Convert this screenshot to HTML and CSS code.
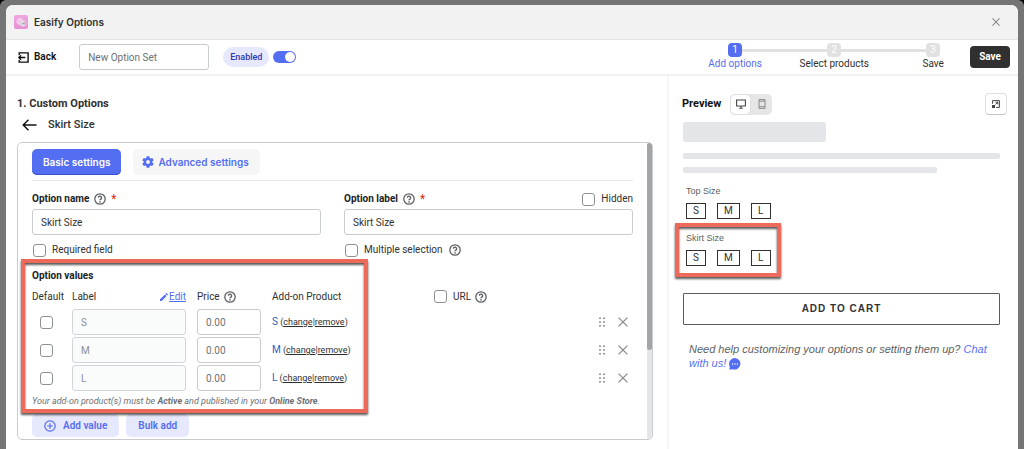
FILE: index.html
```html
<!DOCTYPE html>
<html lang="en">
<head>
<meta charset="utf-8">
<title>Easify Options</title>
<link rel="stylesheet" href="styles.css">
</head>
<body>
<svg class="defs" aria-hidden="true">
  <symbol id="help" viewBox="0 0 12 12"><circle cx="6" cy="6" r="5.2" fill="none" stroke="currentColor" stroke-width="1.3"/><path d="M4.4 4.8a1.6 1.6 0 1 1 2.5 1.3c-.6.4-.9.6-.9 1.2" fill="none" stroke="currentColor" stroke-width="1.3"/><circle cx="6" cy="8.9" r=".8" fill="currentColor"/></symbol>
  <symbol id="close" viewBox="0 0 10 10"><path d="M.6.6l8.800 8.800M9.400.6L.6 9.400" fill="none" stroke="currentColor" stroke-width="1.300"/></symbol>
  <symbol id="drag" viewBox="0 0 6 10"><g fill="currentColor"><circle cx="1" cy="1.200" r="1"/><circle cx="5" cy="1.200" r="1"/><circle cx="1" cy="5" r="1"/><circle cx="5" cy="5" r="1"/><circle cx="1" cy="8.800" r="1"/><circle cx="5" cy="8.800" r="1"/></g></symbol>
</svg>
<div class="window">
  <header class="titlebar">
    <svg class="logo" viewBox="0 0 14 14" aria-hidden="true">
      <defs><linearGradient id="pink" x1="0" y1="0" x2="0" y2="1"><stop offset="0" stop-color="#f0a6e0"/><stop offset="1" stop-color="#e58fd4"/></linearGradient></defs>
      <rect width="14" height="14" rx="2" fill="url(#pink)"/>
      <path d="M2.500 7c0-3 2-4.500 4.200-4.200 2 .2 2.300 2 3.300 3 1.500-.2 2.500 1 2.500 2.700 0 2-1.500 3-3.500 3-1.500 0-1.700-1-2.500-1.500-2 .3-4-.8-4-3z" fill="#f3c9ea"/>
      <path d="M5.500 7.500c1-1.500 3-1.800 4.500-1.200 1.500-.6 2.300.8 2.200 2.500-.2 1.700-1.500 2.700-3.200 2.700-2 0-3.500-1.800-3.500-4z" fill="#dfd6de"/>
      <circle cx="9" cy="8.600" r=".6" fill="#76657a"/><path d="M11 7v2.500" stroke="#8d7f92" stroke-width=".8"/>
    </svg>
    <h1 class="title">Easify Options</h1>
    <button class="icon-button" aria-label="Close"><svg class="icon-8"><use href="#close"/></svg></button>
  </header>

  <div class="toolbar">
    <button class="back">
      <svg class="icon-11" viewBox="0 0 11 11" aria-hidden="true"><path d="M1.200 3V.9h8.900v9.200H1.200V8M.3 5.500h7M3 3.200L.9 5.500 3 7.800" fill="none" stroke="currentColor" stroke-width="1.400"/></svg>
      Back
    </button>
    <input class="field set-name" type="text" placeholder="New Option Set" aria-label="Option set name">
    <label class="pill" for="enabled">Enabled</label>
    <input class="switch" id="enabled" type="checkbox" checked>
    <ol class="steps">
      <li class="step current"><span class="badge">1</span><span>Add options</span></li>
      <li class="rail" aria-hidden="true"></li>
      <li class="step"><span class="badge">2</span><span>Select products</span></li>
      <li class="rail" aria-hidden="true"></li>
      <li class="step"><span class="badge">3</span><span>Save</span></li>
    </ol>
    <button class="save">Save</button>
  </div>

  <div class="columns">
    <main class="editor">
      <h2 class="heading">1. Custom Options</h2>
      <div class="crumb">
        <button class="icon-button" aria-label="Back to options"><svg class="arrow" viewBox="0 0 15 12" aria-hidden="true"><path d="M14.500 6H1.200M6.500 .8L1.200 6l5.300 5.200" fill="none" stroke="currentColor" stroke-width="1.400"/></svg></button>
        <h3 class="crumb-title">Skirt Size</h3>
      </div>

      <section class="panel">
        <div class="panel-body">
          <div class="tabs">
            <button class="tab active">Basic settings</button>
            <button class="tab">
              <svg class="icon-12" viewBox="2 2 20 20" aria-hidden="true"><path fill="currentColor" d="M19.140 12.940c.04-.3.060-.61.060-.94s-.02-.64-.07-.94l2.030-1.580a.49.49 0 0 0 .12-.61l-1.920-3.320a.488.488 0 0 0-.59-.22l-2.390.96c-.5-.38-1.030-.7-1.620-.94l-.36-2.540a.484.484 0 0 0-.48-.41h-3.840c-.24 0-.43.17-.47.41l-.36 2.540c-.59.24-1.130.57-1.620.94l-2.390-.96c-.22-.08-.47 0-.59.22L2.740 8.870c-.12.21-.08.47.12.61l2.030 1.580c-.05.3-.09.63-.09.94s.02.64.07.94l-2.030 1.580a.49.49 0 0 0-.12.61l1.920 3.320c.12.22.37.29.59.22l2.390-.96c.5.38 1.030.7 1.620.94l.36 2.540c.05.24.24.41.48.41h3.840c.24 0 .44-.17.47-.41l.36-2.540c.59-.24 1.130-.56 1.620-.94l2.390.96c.22.08.47 0 .59-.22l1.920-3.320c.12-.22.07-.47-.12-.61l-2.010-1.580zM12 15.200A3.200 3.200 0 1 1 12 8.800a3.200 3.200 0 0 1 0 6.400z"/></svg>
              Advanced settings
            </button>
          </div>

          <div class="fields">
            <div>
              <div class="label-row">
                <label class="strong" for="name">Option name</label>
                <svg class="help"><use href="#help"/></svg><span class="required">*</span>
              </div>
              <input class="field" id="name" type="text" value="Skirt Size">
              <div class="check-row">
                <input class="check" id="required" type="checkbox"><label for="required">Required field</label>
              </div>
            </div>
            <div>
              <div class="label-row">
                <label class="strong" for="label">Option label</label>
                <svg class="help"><use href="#help"/></svg><span class="required">*</span>
                <span class="hidden-option"><input class="check" id="hidden" type="checkbox"><label for="hidden">Hidden</label></span>
              </div>
              <input class="field" id="label" type="text" value="Skirt Size">
              <div class="check-row">
                <input class="check" id="multiple" type="checkbox"><label for="multiple">Multiple selection</label>
                <svg class="help"><use href="#help"/></svg>
              </div>
            </div>
          </div>

          <div class="values">
            <h4 class="values-title">Option values</h4>
            <table class="table">
              <colgroup><col class="col-default"><col class="col-label"><col class="col-price"><col class="col-product"><col><col class="col-actions"></colgroup>
              <thead>
                <tr>
                  <th>Default</th>
                  <th><div class="split"><span>Label</span><a class="edit" href="#"><svg class="icon-8" viewBox="0 0 8 8" aria-hidden="true"><path d="M0 8V6.300L4.900 1.400l1.700 1.700L1.700 8zM5.400.9L6 .3q.4-.4.8 0l.9.9q.4.4 0 .8l-.6.6z" fill="currentColor"/></svg><span>Edit</span></a></div></th>
                  <th><div class="inline">Price<svg class="help"><use href="#help"/></svg></div></th>
                  <th>Add-on Product</th>
                  <th><div class="inline"><input class="check" id="url" type="checkbox"><label class="url-label" for="url">URL</label><svg class="help"><use href="#help"/></svg></div></th>
                  <th></th>
                </tr>
              </thead>
              <tbody>
                <tr>
                  <td><input class="check centred" type="checkbox" aria-label="Default S"></td>
                  <td><input class="field" type="text" value="S" disabled aria-label="Label S"></td>
                  <td><input class="field" type="text" placeholder="0.00" aria-label="Price S"></td>
                  <td class="product"><a href="#">S</a> (<a class="action" href="#">change</a>|<a class="action" href="#">remove</a>)</td>
                  <td></td>
                  <td><div class="row-actions"><svg class="drag"><use href="#drag"/></svg><button class="icon-button" aria-label="Delete S"><svg class="icon-10"><use href="#close"/></svg></button></div></td>
                </tr>
                <tr>
                  <td><input class="check centred" type="checkbox" aria-label="Default M"></td>
                  <td><input class="field" type="text" value="M" disabled aria-label="Label M"></td>
                  <td><input class="field" type="text" placeholder="0.00" aria-label="Price M"></td>
                  <td class="product"><a href="#">M</a> (<a class="action" href="#">change</a>|<a class="action" href="#">remove</a>)</td>
                  <td></td>
                  <td><div class="row-actions"><svg class="drag"><use href="#drag"/></svg><button class="icon-button" aria-label="Delete M"><svg class="icon-10"><use href="#close"/></svg></button></div></td>
                </tr>
                <tr>
                  <td><input class="check centred" type="checkbox" aria-label="Default L"></td>
                  <td><input class="field" type="text" value="L" disabled aria-label="Label L"></td>
                  <td><input class="field" type="text" placeholder="0.00" aria-label="Price L"></td>
                  <td class="product"><a href="#">L</a> (<a class="action" href="#">change</a>|<a class="action" href="#">remove</a>)</td>
                  <td></td>
                  <td><div class="row-actions"><svg class="drag"><use href="#drag"/></svg><button class="icon-button" aria-label="Delete L"><svg class="icon-10"><use href="#close"/></svg></button></div></td>
                </tr>
              </tbody>
            </table>
            <p class="note">Your add-on product(s) must be <b>Active</b> and published in your <b>Online Store</b>.</p>
            <div class="highlight highlight-values"></div>
          </div>

          <div class="adders">
            <button class="soft"><svg class="icon-12" viewBox="0 0 12 12" aria-hidden="true"><circle cx="6" cy="6" r="5.200" fill="none" stroke="currentColor" stroke-width="1.200"/><path d="M6 3.200v5.600M3.200 6h5.600" stroke="currentColor" stroke-width="1.200"/></svg>Add value</button>
            <button class="soft">Bulk add</button>
          </div>
        </div>
        <div class="scroll-track"><div class="scroll-thumb"></div></div>
      </section>
    </main>

    <aside class="preview">
      <div class="preview-head">
        <h2 class="preview-title">Preview</h2>
        <div class="devices">
          <button class="device on" aria-label="Desktop"><svg class="icon-10" viewBox="0 0 10 10" aria-hidden="true"><path d="M.6 1h8.800v6H.6zM3.200 9.300h3.600M5 7v2.300" fill="none" stroke="currentColor" stroke-width="1.100"/></svg></button>
          <button class="device" aria-label="Mobile"><svg class="icon-10" viewBox="0 0 10 10" aria-hidden="true"><path d="M2 .6h6v8.800H2zM2 2.200h6M2 7.700h6" fill="none" stroke="currentColor" stroke-width="1"/></svg></button>
        </div>
        <button class="expand" aria-label="Expand preview"><svg class="icon-8" viewBox="0 0 8 8" aria-hidden="true"><path d="M.6 3.800V.6h6.800v6.800H4.200M3.500 4.500l2.300-2.300M3.600 2.200h2.200v2.200" fill="none" stroke="currentColor" stroke-width="1"/><path d="M0 5h3v3H0z" fill="currentColor"/></svg></button>
      </div>
      <div class="preview-body">
        <div class="bone bone-title"></div>
        <div class="bone"></div>
        <div class="bone bone-short"></div>
        <div class="option">
          <p class="option-name">Top Size</p>
          <div class="swatches"><button class="swatch">S</button><button class="swatch">M</button><button class="swatch">L</button></div>
        </div>
        <div class="option">
          <p class="option-name">Skirt Size</p>
          <div class="swatches"><button class="swatch">S</button><button class="swatch">M</button><button class="swatch">L</button></div>
          <div class="highlight highlight-option"></div>
        </div>
        <button class="cart">ADD TO CART</button>
        <p class="chat">Need help customizing your options or setting them up? <a href="#">Chat with us! <svg class="icon-12" viewBox="0 0 12 12" aria-hidden="true"><path d="M6 0a5.800 5.800 0 1 1-2.500 11.200L.4 11.700l.3-3.200A5.800 5.800 0 0 1 6 0z" fill="currentColor"/><g fill="#fff"><circle cx="3.600" cy="6" r=".7"/><circle cx="6" cy="6" r=".7"/><circle cx="8.400" cy="6" r=".7"/></g></svg></a></p>
      </div>
    </aside>
  </div>
</div>
</body>
</html>
```

FILE: styles.css
```css
* { box-sizing: border-box; }
html { background: #000; }
body {
  margin: 0;
  min-height: 100vh;
  padding: 5px 6px 0;
  display: flex;
  background: #757575;
  border-radius: 6px 6px 0 0;
  color: #303030;
  font: 10px/14px Roboto, "Liberation Sans", sans-serif;
}
h1, h2, h3, h4, p, ol { margin: 0; padding: 0; font-size: 10px; }
button, input { font: inherit; color: inherit; margin: 0; }
button { padding: 0; border: 0; background: none; cursor: pointer; white-space: nowrap; }
svg { display: block; flex: none; }
.defs { position: absolute; width: 0; height: 0; }
.icon-8 { width: 8px; height: 8px; }
.icon-10 { width: 10px; height: 10px; }
.icon-11 { width: 11px; height: 11px; }
.icon-12 { width: 12px; height: 12px; }

.window {
  flex: 1;
  display: flex;
  flex-direction: column;
  background: #fff;
  border-radius: 7px 7px 0 0;
  overflow: hidden;
}
.titlebar {
  display: flex;
  align-items: center;
  gap: 6px;
  height: 35px;
  padding: 0 18px 0 8px;
  background: #f2f2f2;
  border-bottom: 1px solid #e3e3e3;
}
.logo { width: 14px; height: 14px; }
.title { flex: 1; font-weight: 600; font-family: Inter, sans-serif; }
.icon-button { color: #8a8a8a; }

.toolbar {
  display: flex;
  align-items: center;
  height: 36px;
  padding: 0 8px 0 12px;
  border-bottom: 2px solid #f1f1f1;
}
.back {
  display: flex;
  align-items: center;
  gap: 5px;
  color: #111;
  font-weight: 600;
}
.field {
  display: block;
  width: 100%;
  height: 26px;
  padding: 0 8px;
  border: 1px solid #c9cccf;
  border-radius: 3px;
  background: #fff;
}
.field::placeholder { color: #6d7175; opacity: 1; }
.field:disabled { background: #fafbfb; border-color: #d2d5d8; color: #8c9196; }
.set-name { width: 130px; margin: 0 14px 0 23px; }
.pill {
  padding: 3px 7px;
  border-radius: 10px;
  background: #e6e9fd;
  color: #2c37b0;
  font-size: 9px;
  font-weight: 500;
}
.switch {
  appearance: none;
  width: 23px;
  height: 12px;
  margin-left: 4px;
  padding: 1px;
  border-radius: 6px;
  background: #546ef2;
  display: flex;
  justify-content: flex-end;
}
.switch::before { content: ""; width: 10px; height: 10px; border-radius: 50%; background: #fff; }
.steps {
  display: flex;
  align-items: flex-start;
  width: 212px;
  margin: 0 30px 0 auto;
  list-style: none;
}
.step {
  display: flex;
  flex-direction: column;
  align-items: center;
  width: 14px;
  white-space: nowrap;
}
.badge {
  width: 14px;
  height: 14px;
  border-radius: 4px;
  background: #e1e1e1;
  color: #fff;
  text-align: center;
}
.rail { flex: 1; height: 3px; margin-top: 6px; background: #e1e1e1; }
.current { color: #546ef2; }
.current .badge { background: #546ef2; }
.save {
  height: 22px;
  padding: 0 9px;
  border-radius: 4px;
  background: #303030;
  color: #fff;
  font-weight: 700;
}

.columns { flex: 1; display: grid; grid-template-columns: 661fr 351fr; }
.editor { padding: 17px 14px 8px 11px; min-width: 0; }
.heading { font-size: 11px; line-height: 22px; font-weight: 700; }
.crumb { display: flex; align-items: center; gap: 11px; height: 20px; padding-left: 5px; margin-bottom: 7px; }
.crumb .icon-button { color: #111; }
.arrow { width: 15px; height: 12px; }
.crumb-title { font-size: 11px; font-weight: 500; }

.panel {
  display: flex;
  border: 1px solid #c9cccf;
  border-radius: 5px;
}
.panel-body { flex: 1; min-width: 0; padding: 6px 14px 2px; }
.scroll-track { width: 5px; background: #e6e6e6; border-radius: 0 4px 4px 0; }
.scroll-thumb { height: 70%; background: #a5a5a5; border-radius: 3px; }
.tabs { display: flex; gap: 12px; padding-bottom: 5px; border-bottom: 1px solid #ebebeb; }
.tab {
  display: flex;
  align-items: center;
  gap: 4px;
  height: 26px;
  padding: 0 11px 0 9px;
  border-radius: 5px;
  background: #f6f6f7;
  color: #546ef2;
  font: 600 10px/14px Inter, sans-serif;
}
.tab.active { padding: 0 11px; background: #546ef2; color: #fff; box-shadow: inset 0 -1px #3c52cc; }

.fields { display: grid; grid-template-columns: 1fr 1fr; gap: 23px; }
.label-row { display: flex; align-items: center; gap: 5px; height: 28px; padding-top: 8px; }
.strong, .values-title { color: #202223; font-weight: 700; }
.help { width: 12px; height: 12px; color: #5c5f62; }
.required { color: #d72c0d; font-size: 12px; }
.hidden-option { display: flex; align-items: center; gap: 6px; margin-left: auto; }
.check-row { display: flex; align-items: center; gap: 6px; height: 30px; padding-left: 1px; }
.check {
  appearance: none;
  flex: none;
  width: 13px;
  height: 13px;
  border: 1px solid #8c9196;
  border-radius: 3px;
  background: #fff;
}
.centred { display: block; margin-left: 8px; }

.values { position: relative; }
.values-title { line-height: 22px; }
.table { width: 100%; table-layout: fixed; border-collapse: collapse; }
.table th { height: 21px; padding: 0 0 2px; font-weight: 400; text-align: left; }
.table td { height: 28px; padding: 0; white-space: nowrap; }
.col-default { width: 40px; }
.col-label { width: 125px; }
.col-price { width: 75px; }
.col-product { width: 162px; }
.col-actions { width: 36px; }
.table td:nth-child(2), .table td:nth-child(3),
.table th:nth-child(2) { padding-right: 11px; }
.split { display: flex; justify-content: space-between; }
.inline { display: flex; align-items: center; gap: 4px; }
.url-label { padding-left: 2px; }
.edit { display: flex; align-items: center; gap: 1px; color: #546ef2; text-decoration: none; }
.edit span { text-decoration: underline; }
.product { font-size: 9px; }
.product a { color: #2c5fc4; font-size: 10px; text-decoration: none; }
.product .action { color: #303030; font-size: 9px; text-decoration: underline; }
.row-actions { display: flex; align-items: center; justify-content: flex-end; gap: 13px; padding-right: 5px; color: #8c9196; }
.drag { width: 6px; height: 10px; }
.note { color: #6d7175; font-size: 9px; line-height: 18px; font-style: italic; }
.adders { display: flex; gap: 7px; padding-top: 4px; }
.soft {
  display: flex;
  align-items: center;
  gap: 7px;
  height: 23px;
  padding: 0 12px;
  border-radius: 5px;
  background: #e6e9fd;
  color: #546ef2;
  font-weight: 600;
}
.highlight {
  position: absolute;
  border: 4px solid #ed6a5a;
  filter: drop-shadow(0 2px 1px rgba(0, 0, 0, .65));
  pointer-events: none;
}
.highlight-values { top: -6px; left: -11px; bottom: -3px; width: 347px; }

.preview { padding: 17px 11px 0 13px; border-left: 2px solid #f6f6f6; color: #5c5f62; min-width: 0; }
.preview-head { display: flex; align-items: center; height: 22px; }
.preview-title { color: #111; font-size: 11px; font-weight: 700; }
.devices { display: flex; margin-left: 9px; border-radius: 5px; background: #e6e6e6; }
.device { display: grid; place-items: center; width: 21px; height: 21px; color: #8a8a8a; }
.device.on { background: #fff; border: 1px solid #dedede; border-radius: 5px; color: #444; }
.expand {
  display: grid;
  place-items: center;
  width: 22px;
  height: 22px;
  margin-left: auto;
  border: 1px solid #dedede;
  border-bottom-color: #c4c4c4;
  border-radius: 4px;
  color: #444;
}
.preview-body { display: flex; flex-direction: column; padding: 7px 7px 0 1px; }
.bone { height: 6px; margin-bottom: 8px; border-radius: 2px; background: #e4e5e9; }
.bone-title { width: 45%; height: 20px; margin-bottom: 11px; }
.bone-short { width: 80%; margin-bottom: 11px; }
.option { position: relative; padding-left: 3px; margin-bottom: 12px; }
.option-name { font: 9px/14px "Liberation Sans", sans-serif; margin-bottom: 5px; }
.swatches { display: flex; gap: 11px; }
.swatch {
  min-width: 20px;
  height: 16px;
  padding: 0 6px;
  border: 1px solid #303030;
  color: #303030;
  line-height: 14px;
}
.highlight-option { top: -8px; left: -11px; bottom: -11px; width: 106px; }
.option .highlight-option { left: -8px; }
.cart {
  height: 32px;
  margin-top: 15px;
  border: 1px solid #5c5c5c;
  border-radius: 1px;
  color: #333;
  font: 700 10px/14px "Liberation Sans", sans-serif;
  letter-spacing: 1px;
}
.chat { padding: 17px 0 0 6px; font: italic 11px/14px "Liberation Sans", sans-serif; }
.chat a { color: #546ef2; text-decoration: none; }
.chat svg { display: inline-block; vertical-align: middle; }
```
